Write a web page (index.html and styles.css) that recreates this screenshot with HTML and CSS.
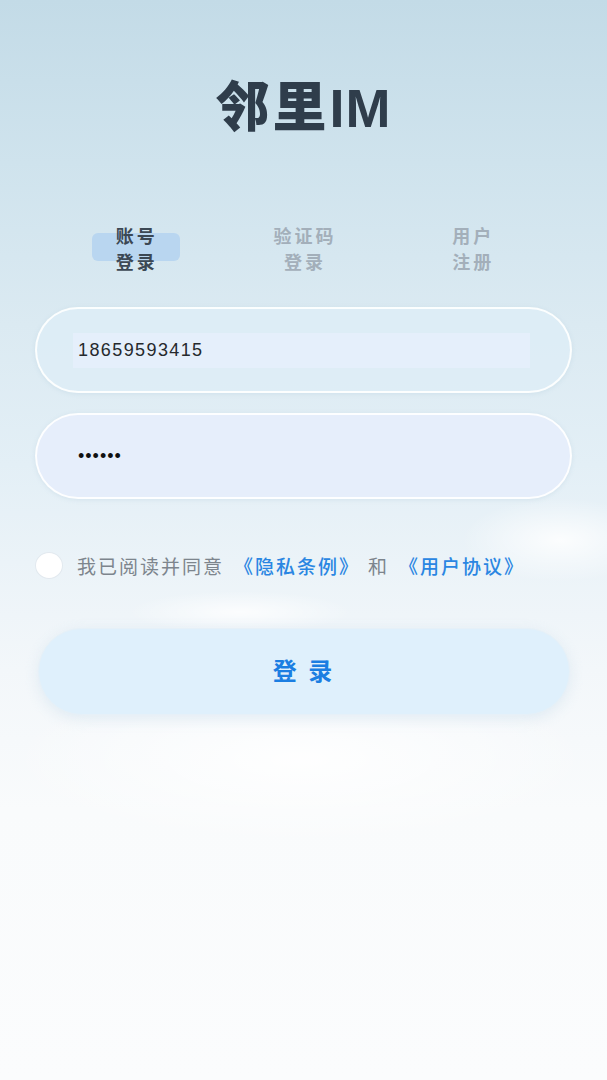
FILE: index.html
```html
<!DOCTYPE html>
<html lang="zh-CN">
<head>
<meta charset="utf-8">
<title>邻里IM</title>
<link rel="stylesheet" href="styles.css">
</head>
<body>
<main class="page">
  <h1 class="title">邻里<span class="title-latin">IM</span></h1>

  <nav class="tabs">
    <div class="tab active"><span class="tab-text">账号<br>登录</span></div>
    <div class="tab"><span class="tab-text">验证码<br>登录</span></div>
    <div class="tab"><span class="tab-text">用户<br>注册</span></div>
  </nav>

  <div class="field field-phone">
    <div class="field-inner">18659593415</div>
  </div>
  <div class="field field-pass">
    <div class="field-inner dots">••••••</div>
  </div>

  <div class="agree">
    <span class="check"></span>
    <span class="agree-text">我已阅读并同意</span>
    <span class="link">《隐私条例》</span>
    <span class="agree-text">和</span>
    <span class="link">《用户协议》</span>
  </div>

  <button class="login">登 录</button>
</main>
</body>
</html>
```

FILE: styles.css
```css
html, body {
  margin: 0;
  padding: 0;
}

body {
  width: 607px;
  height: 1080px;
  overflow: hidden;
  font-family: "Noto Sans CJK SC", "Noto Sans", sans-serif;
  background:
    radial-gradient(ellipse 140px 60px at 560px 540px, rgba(255,255,255,0.85), rgba(255,255,255,0) 70%),
    radial-gradient(ellipse 160px 30px at 240px 612px, rgba(255,255,255,0.8), rgba(255,255,255,0) 70%),
    radial-gradient(ellipse 420px 120px at 300px 760px, rgba(255,255,255,0.9), rgba(255,255,255,0) 70%),
    linear-gradient(180deg, #c3dbe7 0%, #cfe3ed 15%, #dbeaf2 30%, #e3eff6 43%, #ebf3f8 52%, #f3f7fa 62%, #f9fbfc 75%, #fbfcfd 100%);
}

.page {
  display: flex;
  flex-direction: column;
  padding: 74px 35px 0;
}

.title {
  margin: 0;
  text-align: center;
  font-size: 54px;
  line-height: 60px;
  font-weight: 900;
  color: #2f3d4b;
  letter-spacing: 3px;
}

.title-latin {
  font-family: "Liberation Sans", Arial, sans-serif;
  font-weight: 700;
  letter-spacing: 1px;
}

.tabs {
  display: grid;
  grid-template-columns: repeat(3, 1fr);
  margin: 84px 16px 0;
}

.tab {
  position: relative;
  display: flex;
  justify-content: center;
}

.tab-text {
  position: relative;
  z-index: 1;
  font-size: 18px;
  line-height: 26px;
  font-weight: 600;
  letter-spacing: 3px;
  margin-right: -3px;
  text-align: center;
  color: #a3afba;
}

.tab.active .tab-text {
  color: #3c4854;
}

.tab.active::before {
  content: "";
  position: absolute;
  top: 11px;
  left: 50%;
  width: 88px;
  height: 28px;
  margin-left: -43px;
  border-radius: 6px;
  background: #b9d6f0;
}

.field {
  box-sizing: border-box;
  height: 86px;
  border: 2px solid rgba(255,255,255,0.9);
  border-radius: 43px;
  display: flex;
  align-items: center;
  padding: 0 40px 0 36px;
  box-shadow: 0 1px 4px rgba(160,190,210,0.25);
}

.field-phone {
  margin-top: 33px;
  background: rgba(222,237,247,0.75);
}

.field-pass {
  margin-top: 20px;
  background: #e6eefb;
}

.field-inner {
  flex: 1;
  height: 35px;
  display: flex;
  align-items: center;
  padding-left: 5px;
  font-family: "Liberation Sans", Arial, sans-serif;
  font-size: 18px;
  letter-spacing: 1.4px;
  color: #26292d;
}

.field-phone .field-inner {
  background: #e5effb;
}

.dots {
  font-size: 18px;
  letter-spacing: 1px;
  color: #111;
}

.agree {
  display: flex;
  align-items: center;
  margin-top: 52px;
  height: 28px;
  font-size: 19px;
  letter-spacing: 2px;
}

.check {
  box-sizing: border-box;
  width: 28px;
  height: 27px;
  border-radius: 50%;
  background: #ffffff;
  border: 1px solid #e2e9ef;
  margin-right: 14px;
  flex: none;
}

.agree-text {
  color: #7d858d;
  margin-right: 10px;
}

.link {
  color: #2a86e2;
  font-weight: 500;
  margin-right: 8px;
}

.login {
  margin: 49px 2px 0 3px;
  height: 87px;
  border-radius: 44px;
  border: 1px solid #e6f0f8;
  background: #dff0fc;
  box-shadow: 0 4px 14px rgba(200,220,235,0.45);
  font-family: "Noto Sans CJK SC", sans-serif;
  font-size: 24px;
  font-weight: 700;
  letter-spacing: 3px;
  padding: 0 0 4px;
  color: #1b7ee2;
  cursor: pointer;
}
```
